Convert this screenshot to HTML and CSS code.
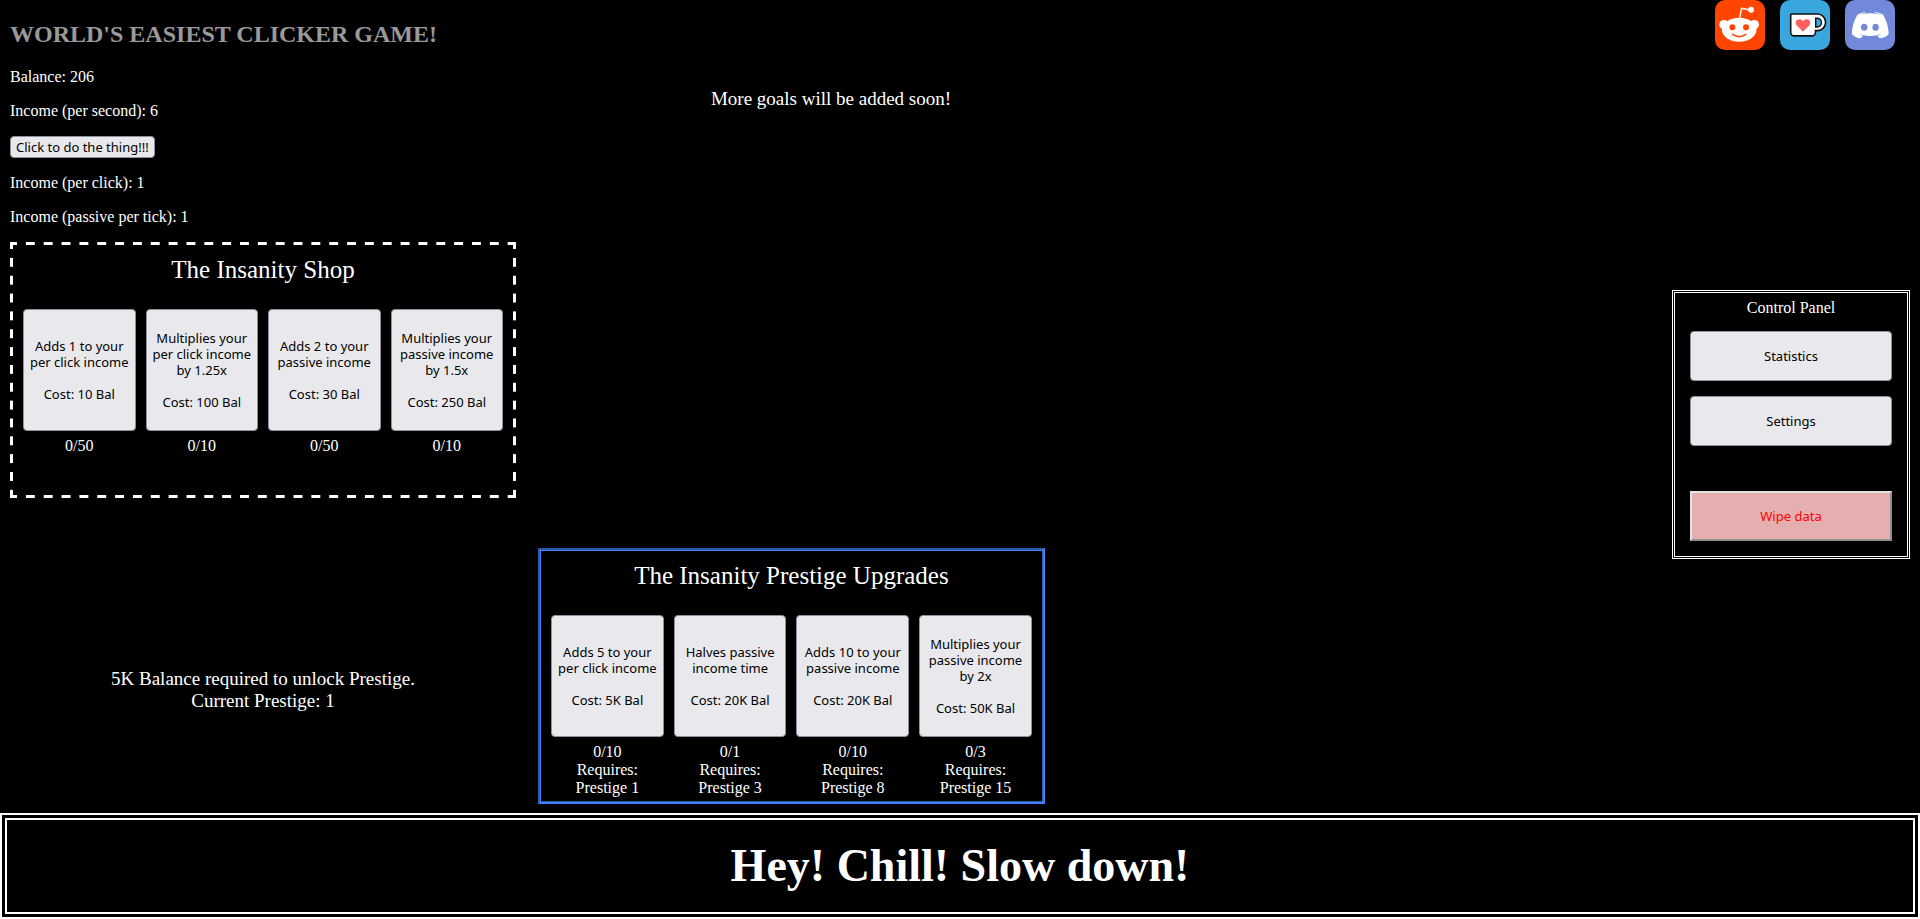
FILE: index.html
```html
<!DOCTYPE html>
<html lang="en">
<head>
<meta charset="utf-8">
<meta name="viewport" content="width=device-width, initial-scale=1">
<title>World's Easiest Clicker Game</title>
<link rel="stylesheet" href="styles.css">
</head>
<body>
<main class="game">
  <div class="col-left">
    <h1 class="title">WORLD'S EASIEST CLICKER GAME!</h1>
    <div class="stats">
      <p>Balance: 206</p>
      <p>Income (per second): 6</p>
      <button class="btn click-btn" type="button">Click to do the thing!!!</button>
      <p>Income (per click): 1</p>
      <p>Income (passive per tick): 1</p>
    </div>
    <section class="shop shop-dashed">
      <h2 class="shop-title">The Insanity Shop</h2>
      <div class="cards">
        <div class="card"><button class="btn card-btn" type="button">Adds 1 to your per click income<br><br>Cost: 10 Bal</button><p class="count">0/50</p></div>
        <div class="card"><button class="btn card-btn" type="button">Multiplies your per click income by 1.25x<br><br>Cost: 100 Bal</button><p class="count">0/10</p></div>
        <div class="card"><button class="btn card-btn" type="button">Adds 2 to your passive income<br><br>Cost: 30 Bal</button><p class="count">0/50</p></div>
        <div class="card"><button class="btn card-btn" type="button">Multiplies your passive income by 1.5x<br><br>Cost: 250 Bal</button><p class="count">0/10</p></div>
      </div>
    </section>
    <p class="prestige">5K Balance required to unlock Prestige.<br>Current Prestige: 1</p>
  </div>

  <div class="col-middle">
    <p class="goals">More goals will be added soon!</p>
    <section class="shop shop-prestige">
      <h2 class="shop-title">The Insanity Prestige Upgrades</h2>
      <div class="cards">
        <div class="card"><button class="btn card-btn" type="button">Adds 5 to your per click income<br><br>Cost: 5K Bal</button><p class="count">0/10<br>Requires:<br>Prestige 1</p></div>
        <div class="card"><button class="btn card-btn" type="button">Halves passive income time<br><br>Cost: 20K Bal</button><p class="count">0/1<br>Requires:<br>Prestige 3</p></div>
        <div class="card"><button class="btn card-btn" type="button">Adds 10 to your passive income<br><br>Cost: 20K Bal</button><p class="count">0/10<br>Requires:<br>Prestige 8</p></div>
        <div class="card"><button class="btn card-btn" type="button">Multiplies your passive income by 2x<br><br>Cost: 50K Bal</button><p class="count">0/3<br>Requires:<br>Prestige 15</p></div>
      </div>
    </section>
  </div>

  <div class="col-right">
    <nav class="links">
      <a href="#reddit" aria-label="Reddit"><svg class="icon" viewBox="0 0 50 50">
        <rect width="50" height="50" rx="10" fill="#ff4500"/>
        <path d="M24.5 19 26.6 8.2 35 10" fill="none" stroke="#fff" stroke-width="1.4" stroke-linejoin="round"/>
        <g fill="#fff"><circle cx="36" cy="9.7" r="3"/><circle cx="9" cy="24.6" r="4.7"/><circle cx="39.3" cy="24.6" r="4.7"/><ellipse cx="24.2" cy="29.8" rx="17.3" ry="12"/></g>
        <g fill="#ff4500"><circle cx="17.4" cy="27.3" r="3"/><circle cx="31" cy="27.3" r="3"/></g>
        <path d="M17.6 34.4q6.6 4.6 13.2 0" fill="none" stroke="#ff4500" stroke-width="1.6" stroke-linecap="round"/>
      </svg></a>
      <a href="#kofi" aria-label="Ko-fi"><svg class="icon" viewBox="0 0 50 50">
        <rect width="50" height="50" rx="10" fill="#39a6de"/>
        <path d="M11.6 14h26.2a7.8 8.3 0 0 1 0 16.6H35.5v1.6a3.7 3.7 0 0 1-3.7 3.7H14.4a3.7 3.7 0 0 1-3.7-3.7V14.9a.9.9 0 0 1 .9-.9z" fill="#fff" stroke="#111" stroke-width="1.6"/>
        <path d="M35.7 18.2h1.4a4.4 4.4 0 0 1 0 8.8h-1.4z" fill="#39a6de" stroke="#111" stroke-width="1.4"/>
        <path d="M23 31.7L16.8 25.5C13.2 21 19 16.5 23 21.2C27 16.5 32.8 21 29.2 25.5Z" fill="#ff5f5f"/>
      </svg></a>
      <a href="#discord" aria-label="Discord"><svg class="icon" viewBox="0 0 50 50">
        <rect width="50" height="50" rx="10" fill="#7289da"/>
        <path d="M12.5 14.6Q17 12.3 21 12L20 13Q17 13.4 14.5 14.8Q19 13.2 25.2 13.2Q31.500 13.2 36 14.8Q33.500 13.4 30.4 13L29.4 12Q33.5 12.3 38 14.6Q43.5 24 43.7 34Q40.5 38 34.5 38.3L32.4 35.6Q34.500 35 36 34Q31 36 25.2 36Q19.5 36 14.5 34Q16 35 18.1 35.6L16 38.3Q10 38 6.8 34Q7 24 12.5 14.6Z" fill="#fff"/>
        <g fill="#7289da"><ellipse cx="19.2" cy="27.2" rx="3.2" ry="3.5"/><ellipse cx="30.6" cy="27.2" rx="3.2" ry="3.5"/></g>
      </svg></a>
    </nav>
    <section class="panel">
      <h2 class="panel-title">Control Panel</h2>
      <button class="btn panel-btn" type="button">Statistics</button>
      <button class="btn panel-btn" type="button">Settings</button>
      <button class="btn panel-btn wipe" type="button">Wipe data</button>
    </section>
  </div>
</main>
<footer class="banner">Hey! Chill! Slow down!</footer>
</body>
</html>
```
FILE: styles.css
```css
* { box-sizing: border-box; }
body {
  margin: 0;
  min-height: 100vh;
  display: flex;
  flex-direction: column;
  background: #000;
  color: #fff;
  font: 16px/18px "Liberation Serif", "Times New Roman", serif;
}
h1, h2, p { margin: 0; font-weight: 400; }
.game { flex: 1; display: grid; grid-template-columns: 506fr 586fr 504fr 238fr; gap: 22px; padding: 0 10px; }
.col-left { display: flex; flex-direction: column; }
.col-middle { display: flex; flex-direction: column; justify-content: space-between; padding: 88px 0 9px; }
.col-right { grid-column: 4; }

.title { padding: 20px 0; font-size: 24px; line-height: 28px; font-weight: 700; color: #999; }
.stats { display: flex; flex-direction: column; align-items: flex-start; gap: 16px; }

.btn {
  border: 1px solid #8f8f9d;
  border-radius: 4px;
  background: #e9e9ed;
  color: #000;
  font: 13px/16px "Noto Sans", Tahoma, sans-serif;
}
.click-btn { height: 22px; padding: 0 5px; }

.shop { padding: 10px 10px 4px; text-align: center; }
/* Long dashes, evenly fitted along each edge and joined at the corners */
.shop-dashed {
  --dash-x: linear-gradient(90deg, #fff 25%, transparent 25% 75%, #fff 75%);
  --dash-y: linear-gradient(#fff 25%, transparent 25% 75%, #fff 75%);
  margin-top: 16px;
  border: 3px solid transparent;
  background-image: var(--dash-x), var(--dash-x), var(--dash-y), var(--dash-y);
  background-origin: padding-box;
  background-clip: border-box;
  background-size: 18px 3px, 18px 3px, 3px 18px, 3px 18px;
  background-position: 0 -3px, 0 calc(100% + 3px), -3px 0, calc(100% + 3px) 0;
  background-repeat: round no-repeat, round no-repeat, no-repeat round, no-repeat round;
}
/* Carved frame: dark outer edge at the top left, light outer edge at the bottom right */
.shop-prestige {
  width: 86.5%;
  padding: 11px 11px 5px;
  border: 2px solid;
  border-color: #2d5bac #4080ff #4080ff #2d5bac;
  box-shadow: inset 1px 1px 0 #4080ff, inset -1px -1px 0 #2d5bac;
}
.shop-title { margin-bottom: 24px; font-size: 25px; line-height: 30px; }
.cards { display: grid; grid-template-columns: repeat(4, 1fr); gap: 10px; }
.card-btn { width: 100%; height: 122px; padding: 0 5px; }
.count { min-height: 54px; margin-top: 6px; }

.prestige { flex: 1; display: flex; flex-direction: column; justify-content: center; padding-top: 68px; text-align: center; font-size: 19px; line-height: 22px; }
.goals { text-align: center; font-size: 19px; line-height: 22px; }

.links { display: flex; justify-content: flex-end; gap: 15px; padding-right: 15px; }
.icon { display: block; width: 50px; height: 50px; }
.panel { display: flex; flex-direction: column; gap: 15px; margin-top: 240px; padding: 6px 15px 15px; border: 3px double #fff; }
.panel-title { font-size: 16px; line-height: 17px; text-align: center; }
.panel-btn { height: 50px; }
.wipe { margin-top: 30px; border: 2px outset #e3e3e3; border-radius: 0; background: #e6afaf; color: #f00; }

.banner { border: 7px double #fff; padding: 18px; text-align: center; font-size: 46px; line-height: 56px; font-weight: 700; }
```
